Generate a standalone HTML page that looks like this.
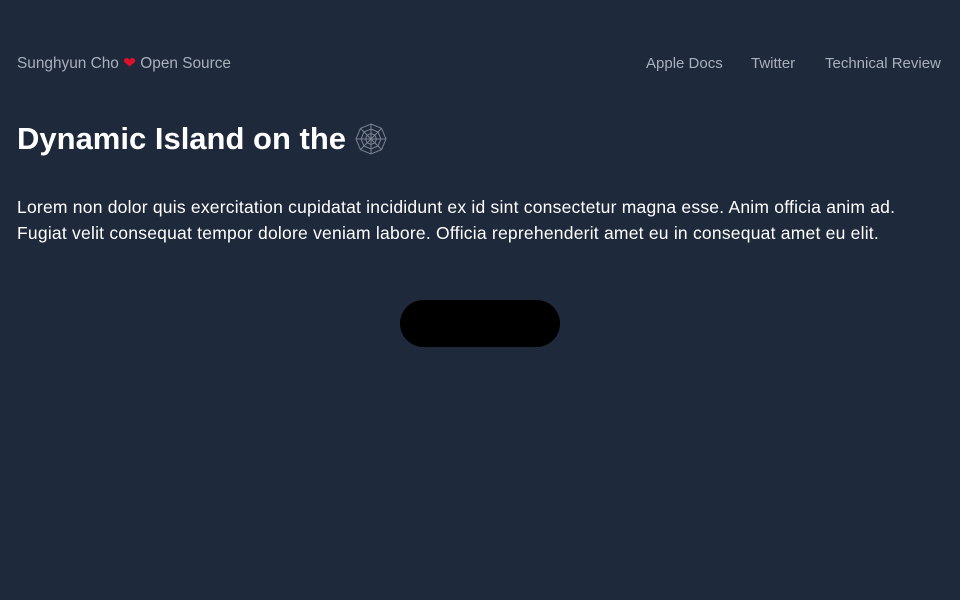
<!DOCTYPE html>
<html><head><meta charset="utf-8"><style>
html,body{margin:0;padding:0;background:#1e293b;width:960px;height:600px;overflow:hidden;font-family:"Liberation Sans",sans-serif}
.nav{position:absolute;top:55px;font-size:15px;color:#a8b0bd;white-space:nowrap}
.h1{position:absolute;left:17px;top:121px;font-size:31px;font-weight:bold;color:#fff;white-space:nowrap}
.p{position:absolute;left:17px;top:194px;width:943px;font-size:17.5px;line-height:26px;color:#fff;letter-spacing:0.22px;white-space:nowrap}
.island{position:absolute;left:400px;top:300px;width:160px;height:47px;background:#000;border-radius:24px}
</style></head><body>
<div class="nav" style="left:17px;top:54px;font-size:15.4px">Sunghyun Cho <span style="color:#e0102a">&#10084;</span> Open Source</div>
<div class="nav" style="left:646px">Apple Docs</div>
<div class="nav" style="left:751px">Twitter</div>
<div class="nav" style="left:825px">Technical Review</div>
<div class="h1">Dynamic Island on the</div>
<svg style="position:absolute;left:354px;top:122px" width="34" height="34" viewBox="-17 -17 34 34" fill="none" stroke="#7a8290" stroke-width="1">
<polygon points="0,-15 10.6,-10.6 15,0 10.6,10.6 0,15 -10.6,10.6 -15,0 -10.6,-10.6"/>
<polygon points="0,-10 7,-7 10,0 7,7 0,10 -7,7 -10,0 -7,-7"/>
<polygon points="0,-5.5 3.9,-3.9 5.5,0 3.9,3.9 0,5.5 -3.9,3.9 -5.5,0 -3.9,-3.9"/>
<path d="M0-15V15M-15 0H15M-10.6-10.6L10.6 10.6M10.6-10.6L-10.6 10.6"/>
</svg>
<div class="p">Lorem non dolor quis exercitation cupidatat incididunt ex id sint consectetur magna esse. Anim officia anim ad.<br>Fugiat velit consequat tempor dolore veniam labore. Officia reprehenderit amet eu in consequat amet eu elit.</div>
<div class="island"></div>
</body></html>
